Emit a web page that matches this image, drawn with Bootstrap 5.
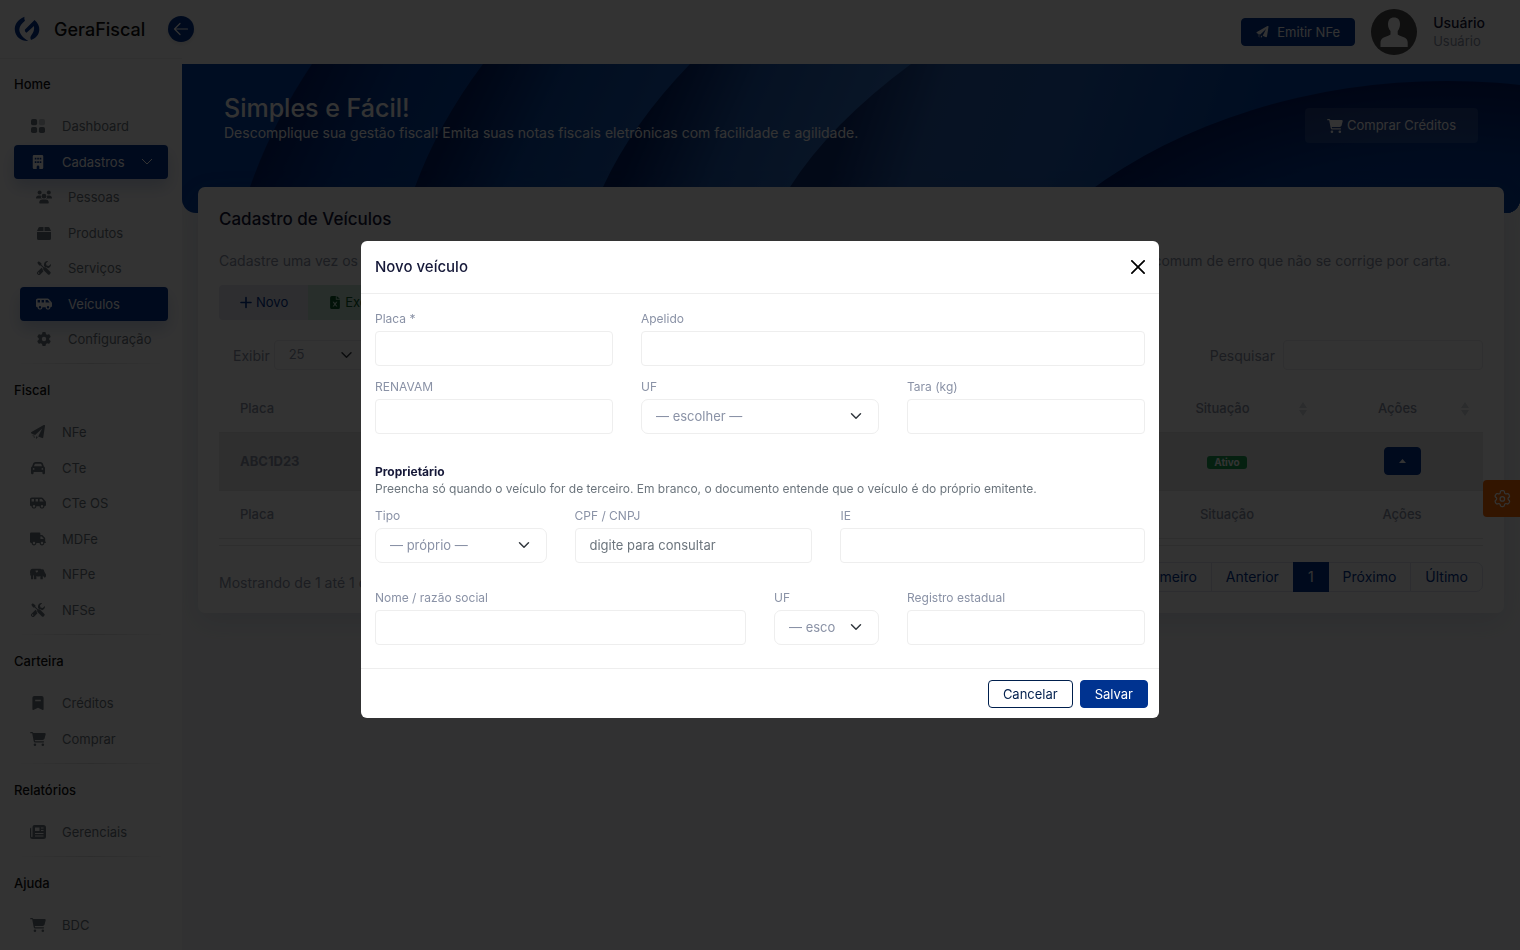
<!DOCTYPE html>
<html lang="pt-BR">
<head>
<meta charset="utf-8">
<meta name="viewport" content="width=device-width, initial-scale=1">
<title>GeraFiscal</title>
<link href="https://cdn.jsdelivr.net/npm/bootstrap@5.3.0/dist/css/bootstrap.min.css" rel="stylesheet">
<style>
:root{--brand:#003390;--ink:#151838;--soft:#8a92a6;--line:#eeeeee}
body{font-family:Inter,"Liberation Sans",sans-serif;font-size:14px;line-height:21px;color:var(--soft);background:#f5f6f8;overflow:hidden}
a{text-decoration:none}
svg{display:block;flex:none}
.ico{width:16px;height:14px;fill:currentColor}
.fs-13{font-size:13px;line-height:18px}
.user-name{line-height:18px;font-weight:500;color:var(--ink)}

/* sidebar */
.side{width:182px;flex:none;background:#fff;height:100vh;position:relative}
.side-head{height:59px;border-bottom:1px solid var(--line);padding-left:14px;gap:14px}
.side-brand{font-size:18px;font-weight:500;color:#111}
.side-toggle{position:absolute;top:16px;right:-12px;width:26px;height:26px;border:0;border-radius:50%;background:var(--brand);color:#fff;z-index:5;box-shadow:0 2px 4px rgba(0,0,0,.1)}
.side-body{padding:8px 14px 0}
.side-title{height:34px;line-height:34px;font-size:13px;font-weight:500;color:#111;margin:0 0 8px}
.side-list{list-style:none;margin:0;padding:0}
.side-list>li:nth-child(odd){margin-bottom:2px}
.side-list>li:nth-child(even){margin-bottom:1px}
.side-list>li:last-child{margin-bottom:0}
.side-link{display:flex;align-items:center;height:34px;padding:0 16px;gap:16px;font-size:13px;color:#6c757d;border-radius:4px}
.side-link.on{background:var(--brand);color:#fff;box-shadow:0 8px 16px rgba(0,51,144,.2)}
.side-sub{margin:1px 0 0 6px}
.side-sub .side-link{padding-right:0}
.side-rule{height:1px;border:0;opacity:1;margin:7px 0 9px;background:linear-gradient(90deg,#fff,#dcdcdc 50%,#fff)}

/* top bar and banner */
.topbar{height:64px;background:#fff;padding-right:35px;gap:16px}
.btn-main{background:var(--brand);border-color:var(--brand);color:#fff}
.btn-flat{font-size:13px;line-height:18px;padding:4px 14px;border-radius:4px}
.banner{height:149px;background:#0040a8;border-radius:0 0 14px 14px;position:relative;overflow:hidden;color:#fff}
.banner-art{position:absolute;inset:0;width:100%;height:100%}
.banner-row{position:relative;padding:30px 42px 0}
.banner h1{font-size:25px;line-height:28px;font-weight:500;margin:0}
.btn-glass{background:rgba(255,255,255,.12);color:#fff;font-size:13px;line-height:19px;padding:8px 22px;border:0;border-radius:4px;margin-top:14px}

/* vehicle card */
.panel{margin:-26px 16px 0;border:0;border-radius:7px;padding:20px 21px;position:relative;box-shadow:0 9px 28px rgba(60,80,140,.12)}
.panel h2{font-size:17px;line-height:24px;font-weight:500;margin:0 0 19px;color:var(--ink)}
.panel-lead{margin:0 0 14px;line-height:21px}
.btn-tool{font-size:13px;line-height:19px;padding:8px 21px;border:0;border-radius:4px}
.btn-tool svg{width:12px;height:13px;fill:currentColor}
.tool-new{background:#e4e6f0;color:var(--brand)}
.tool-xls{background:#c5e6d5;color:#0a5a2a}
.filters{padding:20px 0 0 14px}
.mini-input{height:30px;border:1px solid #e9e9ee;border-radius:4px;font-size:13px;color:var(--soft)}
.mini-select{width:92px;padding:0 32px 0 14px;background-position:right 12px center;background-size:13px 12px}
.mini-search{width:200px}
.table-wrap{margin:16px 0;padding-bottom:6px;border-bottom:1px solid #e6e6e6}
.grid-table{margin:0;width:100%;color:var(--soft)}
.grid-table th,.grid-table td{background:transparent;box-shadow:none;font-size:13px;font-weight:500;color:var(--soft);padding:0 21px;border-color:#e6e6e6;vertical-align:middle}
.grid-table thead th{height:46px;padding-right:30px;position:relative}
.grid-table tbody td{height:58px;background:#ebebeb}
.grid-table tfoot th{height:48px}
.grid-table .c-state{width:188px;text-align:center}
.grid-table .c-act{width:162px;text-align:center}
.sorter{position:absolute;right:14px;top:16px;width:8px;height:14px;fill:#d5d9e0}
.tag-on{background:#1aa053;font-size:10px;line-height:12px;padding:0 7px 1px;height:13px;border-radius:3px;color:#fff;font-weight:700}
.btn-caret{width:37px;height:28px;padding:0;border-radius:4px}
.table-info-text{padding-top:10px}
.page-link{font-size:14px;line-height:20px;padding:4px 14px;color:var(--brand);border-color:#dfe2ee}
.pagination{--bs-pagination-border-radius:7px}
.page-item.active .page-link{background:var(--brand);border-color:var(--brand);color:#fff}
.gearbtn{position:fixed;right:0;top:480px;width:37px;height:37px;border:0;border-radius:4px 0 0 4px;background:#fd6a00;color:#fff}

/* dialog */
.modal-backdrop.show{opacity:.8}
.modal-dialog{--bs-modal-width:798px;--bs-modal-margin:19px;margin:23px auto 15px}
.modal-content{border:0;border-radius:6px}
.modal-header{padding:0 14px;height:53px;border-color:var(--line)}
.modal-title{font-size:15px;line-height:22px;font-weight:500;color:var(--ink)}
.btn-close{width:14px;height:14px;padding:0;margin:0;background-size:14px;opacity:1}
.modal-body{padding:16px 14px 23px}
.modal-body .row{--bs-gutter-x:28px}
.modal-body .form-label{display:block;font-size:12px;line-height:18px;margin:0 0 3px;color:var(--soft)}
.modal-body .form-control,.modal-body .form-select{height:35px;font-size:13px;line-height:19px;padding:7px 14px;border:1px solid var(--line);color:var(--soft)}
.modal-body .form-control{border-radius:4px}
.modal-body .form-control::placeholder{color:#6c757d}
.modal-body .form-select{border-radius:7px;padding-right:42px;background-position:right 15px center;background-size:14px 12px}
.form-next{margin-top:12px}
.form-last{margin-top:26px}
.owner{margin:29px 0 10px}
.owner h6{font-size:12px;line-height:17px;font-weight:700;margin:0;color:var(--ink)}
.owner p{font-size:12px;line-height:17px;margin:0;color:#6c757d}
.modal-footer{padding:11px 11px 10px;gap:7px;border-color:var(--line)}
.modal-footer>*{margin:0}
.btn-cancel{border:1px solid #001f4d;color:#001f4d;background:#fff}
</style>
</head>
<body>
<svg width="0" height="0" class="position-absolute" aria-hidden="true">
  <symbol id="i-cart" viewBox="0 0 576 512"><path d="M0 24C0 10.7 10.7 0 24 0H69.5c22 0 41.5 12.8 50.6 32h411c26.3 0 45.5 25 38.6 50.4l-41 152.3c-8.5 31.4-37 53.3-69.5 53.3H170.7l5.4 28.5c2.2 11.3 12.1 19.5 23.6 19.5H488c13.3 0 24 10.7 24 24s-10.7 24-24 24H199.7c-34.6 0-64.3-24.6-70.7-58.5L77.4 54.5c-.7-3.8-4-6.5-7.9-6.5H24C10.7 48 0 37.3 0 24zM128 464a48 48 0 1 1 96 0 48 48 0 1 1 -96 0zm336-48a48 48 0 1 1 0 96 48 48 0 1 1 0-96z"/></symbol>
  <symbol id="i-plane" viewBox="0 0 512 512"><path d="M500 4c10 7 14 20 12 33l-64 416c-2 20-24 32-44 25L262 420 410 130 150 370 18 312c-22-10-24-40-2-52L464 4c12-6 26-6 36 0zM190 410l60 26-40 56c-12 14-26 6-26-12zM60 360h34v34H60zM110 390h30v30h-30zM70 420h28v28H70zM115 450h26v26h-26z"/></symbol>
  <symbol id="i-gear" viewBox="0 0 512 512"><path d="M495.9 166.6c3.2 8.7 .5 18.4-6.4 24.6l-43.3 39.4c1.1 8.3 1.7 16.8 1.7 25.4s-.6 17.1-1.7 25.4l43.3 39.4c6.9 6.2 9.6 15.9 6.4 24.6c-4.4 11.9-9.7 23.3-15.8 34.3l-4.7 8.1c-6.6 11-14 21.4-22.1 31.2c-5.9 7.2-15.7 9.6-24.5 6.8l-55.7-17.7c-13.4 10.3-28.2 18.9-44 25.4l-12.5 57.1c-2 9.1-9 16.3-18.2 17.8c-13.8 2.3-28 3.5-42.5 3.5s-28.7-1.2-42.5-3.5c-9.2-1.5-16.2-8.7-18.2-17.8l-12.5-57.1c-15.8-6.5-30.6-15.1-44-25.4L83.1 425.9c-8.8 2.8-18.6 .3-24.5-6.8c-8.1-9.8-15.5-20.2-22.1-31.2l-4.7-8.1c-6.1-11-11.4-22.4-15.8-34.3c-3.2-8.7-.5-18.4 6.4-24.6l43.3-39.4C64.6 273.1 64 264.6 64 256s.6-17.1 1.7-25.4L22.4 191.2c-6.9-6.2-9.6-15.9-6.4-24.6c4.4-11.9 9.7-23.3 15.8-34.3l4.7-8.1c6.6-11 14-21.4 22.1-31.2c5.9-7.2 15.7-9.6 24.5-6.8l55.7 17.7c13.4-10.3 28.2-18.9 44-25.4l12.5-57.1c2-9.1 9-16.3 18.2-17.8C227.3 1.2 241.5 0 256 0s28.7 1.2 42.5 3.5c9.2 1.5 16.2 8.7 18.2 17.8l12.5 57.1c15.8 6.5 30.6 15.1 44 25.4l55.7-17.7c8.8-2.8 18.6-.3 24.5 6.8c8.1 9.8 15.5 20.2 22.1 31.2l4.7 8.1c6.1 11 11.4 22.4 15.8 34.3zM256 336a80 80 0 1 0 0-160 80 80 0 1 0 0 160z"/></symbol>
  <symbol id="i-truck" viewBox="0 0 640 512"><path d="M48 0C21.5 0 0 21.5 0 48V368c0 26.5 21.5 48 48 48H64c0 53 43 96 96 96s96-43 96-96H384c0 53 43 96 96 96s96-43 96-96h32c17.7 0 32-14.3 32-32s-14.3-32-32-32V288 256 237.3c0-17-6.7-33.3-18.7-45.3L512 114.7c-12-12-28.3-18.7-45.3-18.7H416V48c0-26.5-21.5-48-48-48H48zM416 160h50.7L544 237.3V256H416V160zM112 416a48 48 0 1 1 96 0 48 48 0 1 1 -96 0zm368-48a48 48 0 1 1 0 96 48 48 0 1 1 0-96z"/></symbol>
  <symbol id="i-van" viewBox="0 0 640 512"><path d="M64 104v88h96V96H72c-4.4 0-8 3.6-8 8zm482 88L465.1 96H384v96H546zm-226 0V96H224v96h96zM592 384H576c0 53-43 96-96 96s-96-43-96-96H256c0 53-43 96-96 96s-96-43-96-96H48c-26.5 0-48-21.5-48-48V104C0 64.2 32.2 32 72 32H192 352 465.1c18.9 0 36.8 8.3 49 22.8L625.3 186.5c9.5 11.2 14.7 25.5 14.7 40.2V336c0 26.5-21.5 48-48 48zm-64 0a48 48 0 1 0 -96 0 48 48 0 1 0 96 0zM160 432a48 48 0 1 0 0-96 48 48 0 1 0 0 96z"/></symbol>
  <symbol id="i-car" viewBox="0 0 512 512"><path d="M135.2 117.4L109.1 192H402.9l-26.1-74.6C372.3 104.6 360.2 96 346.6 96H165.4c-13.6 0-25.7 8.6-30.2 21.4zM39.6 196.8L74.8 96.3C88.3 57.8 124.6 32 165.4 32H346.6c40.8 0 77.1 25.8 90.6 64.3l35.2 100.5c23.2 9.6 39.6 32.5 39.6 59.2V400v48c0 17.7-14.3 32-32 32H448c-17.7 0-32-14.3-32-32V400H96v48c0 17.7-14.3 32-32 32H32c-17.7 0-32-14.3-32-32V400 256c0-26.7 16.4-49.6 39.6-59.2zM128 288a32 32 0 1 0 -64 0 32 32 0 1 0 64 0zm288 32a32 32 0 1 0 0-64 32 32 0 1 0 0 64z"/></symbol>
  <symbol id="i-dash" viewBox="0 0 16 16"><rect x="0" y="0" width="7" height="7" rx="2"/><rect x="9" y="0" width="7" height="7" rx="2" opacity=".4"/><rect x="0" y="9" width="7" height="7" rx="2"/><rect x="9" y="9" width="7" height="7" rx="2"/></symbol>
  <symbol id="i-build" viewBox="0 0 12 16"><path fill-rule="evenodd" d="M1.5 0h9A1.5 1.5 0 0 1 12 1.5v13a1.5 1.5 0 0 1-1.5 1.5H7.5v-2.500a1.5 1.5 0 0 0-3 0V16h-3A1.5 1.5 0 0 1 0 14.500v-13A1.5 1.5 0 0 1 1.5 0zM2.300 3v2h1.900V3zM5.100 3v2h1.900V3zM7.900 3v2h1.900V3zM2.300 7v2h1.900V7zM5.100 7v2h1.900V7zM7.900 7v2h1.900V7z"/></symbol>
  <symbol id="i-users" viewBox="0 0 20 16"><circle cx="4.500" cy="2.500" r="2.500"/><circle cx="16" cy="2.500" r="2.500"/><circle cx="10" cy="7" r="3"/><path d="M0 9.300C0 7.500 1.500 6 3.300 6h1.400c.5 0 1 .1 1.400.3A4 4 0 0 0 7.500 10H.7a.7.7 0 0 1-.7-.7zM20 9.300C20 7.500 18.500 6 16.700 6h-1.400c-.5 0-1 .1-1.400.3A4 4 0 0 1 12.500 10h6.800c.4 0 .7-.3.7-.7zM4 15.200A4.200 4.200 0 0 1 8.200 11h3.600a4.200 4.200 0 0 1 4.200 4.200c0 .4-.4.8-.8.8H4.800a.8.8 0 0 1-.8-.8z"/></symbol>
  <symbol id="i-box" viewBox="0 0 14 14"><path d="M6.500 1v4H0l1.300-3.100A1.500 1.500 0 0 1 2.700 1zM7.500 1v4H14l-1.300-3.100A1.500 1.500 0 0 0 11.300 1zM0 6h14v6.500a1.500 1.500 0 0 1-1.500 1.500h-11A1.500 1.500 0 0 1 0 12.500z"/></symbol>
  <symbol id="i-tools" viewBox="0 0 16 16"><path d="M.3 2 2 .3 5 2.500v1.700l3 3c.8-.3 1.800-.2 2.500.4l4.600 4.600a1.800 1.800 0 0 1 0 2.500l-.4.400a1.800 1.800 0 0 1-2.500 0L7.600 10.500c-.6-.7-.8-1.700-.4-2.500l-3-3H2.500zM15.800 3.300 13.400 5.700 10.800 5.200l-.5-2.600L12.700.2C10.500-.4 8 1.200 8 3.900v1.700l1.200 1.200c1-.2 2 .2 2.700.8l.6.600C15 7.700 16.500 5.500 15.800 3.300zM6.400 8.800 5.200 7.600.6 12.200a2 2 0 0 0 0 2.900l.3.300a2 2 0 0 0 2.900 0L7.400 11.700a4 4 0 0 1-1-2.900zM2.200 14.500a.8.8 0 1 1 0-1.500.8.8 0 0 1 0 1.500z"/></symbol>
  <symbol id="i-mark" viewBox="0 0 12 15"><path fill-rule="evenodd" d="M2 0h8a2 2 0 0 1 2 2v12.300c0 .6-.6.900-1.100.6L6 12.500 1.100 14.900c-.5.300-1.100 0-1.100-.6V2a2 2 0 0 1 2-2zM3 4v1.500h6V4z"/></symbol>
  <symbol id="i-news" viewBox="0 0 16 14"><path fill-rule="evenodd" d="M4.500 0h9A2.500 2.500 0 0 1 16 2.500v9a2.500 2.500 0 0 1-2.500 2.500h-11A2.500 2.500 0 0 1 0 11.500V4a1.500 1.500 0 0 1 1.200-1.500v9c0 .8 1.300.8 1.300 0V2A2 2 0 0 1 4.500 0zM5 2.500V6h4.500V2.500zM11 2.500v1h2.500v-1zM11 5v1h2.500V5zM5 8v1h8.500V8zM5 10.500v1h8.500v-1z"/></symbol>
  <symbol id="i-cow" viewBox="0 0 20 14"><path fill-rule="evenodd" d="M3 .5h9.500c1 0 1.300.8 2 .8L15 .5l1.300 1.200L17 1.200l1 3 2 3.500v2c-.5 1.500-1.600 1.800-2.500 1.300L16 9v4.500h-3v-4c-1.600 1-3.400 1-5 0v4H5V9.500L4 8v5.500H1.300V5L1 6.500V9H0V5C0 2.200 1.300.5 3 .5zM7 2.500v1.500l1.500 1.500L10 4V2.500z"/></symbol>
  <symbol id="i-xls" viewBox="0 0 12 16"><path fill-rule="evenodd" d="M2 0h5v4.500h5V14a2 2 0 0 1-2 2H2a2 2 0 0 1-2-2V2a2 2 0 0 1 2-2zM8 0l4 3.500H8zM3 7l2 3-2 3h1.700L6 11l1.300 2H9l-2-3 2-3H7.300L6 9 4.700 7z"/></symbol>
  <symbol id="i-sort" viewBox="0 0 8 14"><path d="M4 0l4 6H0zM4 14l4-6H0z"/></symbol>
</svg>

<div class="d-flex">
  <aside class="side">
    <div class="side-head d-flex align-items-center">
      <svg width="26" height="26" viewBox="0 0 26 26" fill="#003390"><path d="M10.500.7C3 4 .5 9 .8 14 1.500 21 7 25.300 14.300 25 9 22 5.500 18 5.300 13.500 5.500 9.800 8 7.600 11 4.800 10.300 3.500 10.200 2 10.500.7z"/><path d="M10.800 13.800 20.500 4C24 7 25.500 10 25.300 14 25 19 21.500 22.500 17 24c-1-2-.7-3.500.5-5 2-2.500 3-5.500 2.500-9l-7.500 6.700c-1-.2-1.700-1.300-1.700-2.900z"/></svg>
      <span class="side-brand">GeraFiscal</span>
    </div>
    <button type="button" class="side-toggle d-flex align-items-center justify-content-center p-0" aria-label="Recolher menu"><svg width="16" height="14" viewBox="0 0 16 14" fill="none" stroke="currentColor" stroke-width="1.200" stroke-linecap="round" stroke-linejoin="round"><path d="M14.500 7h-13M7 1.500 1.500 7 7 12.500"/></svg></button>
    <nav class="side-body">
      <h6 class="side-title">Home</h6>
      <ul class="side-list">
        <li><a class="side-link" href="#"><svg class="ico"><use href="#i-dash"/></svg>Dashboard</a></li>
        <li>
          <a class="side-link on" href="#"><svg class="ico"><use href="#i-build"/></svg>Cadastros<svg class="ms-auto" width="12" height="8" viewBox="0 0 12 8" fill="none" stroke="currentColor" stroke-width="1"><path d="M1 1l5 5 5-5"/></svg></a>
          <ul class="side-list side-sub">
            <li><a class="side-link" href="#"><svg class="ico"><use href="#i-users"/></svg>Pessoas</a></li>
            <li><a class="side-link" href="#"><svg class="ico"><use href="#i-box"/></svg>Produtos</a></li>
            <li><a class="side-link" href="#"><svg class="ico"><use href="#i-tools"/></svg>Serviços</a></li>
            <li><a class="side-link on" href="#"><svg class="ico"><use href="#i-van"/></svg>Veículos</a></li>
            <li><a class="side-link" href="#"><svg class="ico"><use href="#i-gear"/></svg>Configuração</a></li>
          </ul>
        </li>
      </ul>
      <hr class="side-rule">
      <h6 class="side-title">Fiscal</h6>
      <ul class="side-list">
        <li><a class="side-link" href="#"><svg class="ico"><use href="#i-plane"/></svg>NFe</a></li>
        <li><a class="side-link" href="#"><svg class="ico"><use href="#i-car"/></svg>CTe</a></li>
        <li><a class="side-link" href="#"><svg class="ico"><use href="#i-van"/></svg>CTe OS</a></li>
        <li><a class="side-link" href="#"><svg class="ico"><use href="#i-truck"/></svg>MDFe</a></li>
        <li><a class="side-link" href="#"><svg class="ico"><use href="#i-cow"/></svg>NFPe</a></li>
        <li><a class="side-link" href="#"><svg class="ico"><use href="#i-tools"/></svg>NFSe</a></li>
      </ul>
      <hr class="side-rule">
      <h6 class="side-title">Carteira</h6>
      <ul class="side-list">
        <li><a class="side-link" href="#"><svg class="ico"><use href="#i-mark"/></svg>Créditos</a></li>
        <li><a class="side-link" href="#"><svg class="ico"><use href="#i-cart"/></svg>Comprar</a></li>
      </ul>
      <hr class="side-rule">
      <h6 class="side-title">Relatórios</h6>
      <ul class="side-list">
        <li><a class="side-link" href="#"><svg class="ico"><use href="#i-news"/></svg>Gerenciais</a></li>
      </ul>
      <hr class="side-rule">
      <h6 class="side-title">Ajuda</h6>
      <ul class="side-list">
        <li><a class="side-link" href="#"><svg class="ico"><use href="#i-cart"/></svg>BDC</a></li>
      </ul>
    </nav>
  </aside>

  <main class="flex-fill overflow-hidden vh-100">
    <header class="topbar d-flex align-items-center justify-content-end">
      <a class="btn btn-main btn-flat d-flex align-items-center gap-2" href="#"><svg width="13" height="12" fill="currentColor"><use href="#i-plane"/></svg>Emitir NFe</a>
      <svg width="46" height="46" viewBox="0 0 46 46"><circle cx="23" cy="23" r="23" fill="#4a4a4a"/><path fill="#fff" d="M23 8.500c4 0 6 2.700 6 6.500 0 3-1 5.500-2.300 7v3.500c2 1.500 5 2 7.300 3.200 2 1 2.700 3 2.700 5V38H9.500v-4.300c0-2 .7-4 2.700-5 2.300-1.200 5.300-1.700 7.300-3.200V22C18 20.500 17 18 17 15c0-3.800 2-6.500 6-6.500z"/></svg>
      <div>
        <div class="user-name">Usuário</div>
        <div class="fs-13">Usuário</div>
      </div>
    </header>

    <section class="banner">
      <svg class="banner-art" viewBox="0 0 1338 149" preserveAspectRatio="none" aria-hidden="true">
        <defs>
          <linearGradient id="g1" gradientUnits="userSpaceOnUse" x1="99" y1="61" x2="280" y2="150"><stop offset="0" stop-color="#002070"/><stop offset=".4" stop-color="#003c9c"/><stop offset="1" stop-color="#0848ac"/></linearGradient>
          <linearGradient id="g2" gradientUnits="userSpaceOnUse" x1="267" y1="61" x2="450" y2="150"><stop offset="0" stop-color="#001e68"/><stop offset=".4" stop-color="#0a48a4"/><stop offset="1" stop-color="#1a5ab8"/></linearGradient>
          <linearGradient id="g3" gradientUnits="userSpaceOnUse" x1="460" y1="61" x2="660" y2="150"><stop offset="0" stop-color="#002068"/><stop offset=".4" stop-color="#1c56ac"/><stop offset="1" stop-color="#3070c4"/></linearGradient>
          <linearGradient id="g4" gradientUnits="userSpaceOnUse" x1="662" y1="61" x2="1040" y2="190"><stop offset="0" stop-color="#0c2e74"/><stop offset=".2" stop-color="#255aac"/><stop offset=".5" stop-color="#205cb4"/><stop offset="1" stop-color="#0042a8"/></linearGradient>
          <radialGradient id="g5"><stop offset=".55" stop-color="#0042a8"/><stop offset=".8" stop-color="#003a98"/><stop offset="1" stop-color="#001c68"/></radialGradient>
        </defs>
        <path fill="url(#g1)" d="M130 0Q90 60 68 123L60 149H1338V0z"/>
        <path fill="url(#g2)" d="M301 0Q256 60 233 123L225 149H1338V0z"/>
        <path fill="url(#g3)" d="M508 0Q450 60 421 123L411 149H1338V0z"/>
        <path fill="url(#g4)" d="M729 0Q648 60 608 123L593 149H1338V0z"/>
        <ellipse fill="url(#g5)" cx="1265" cy="400" rx="510" ry="383"/>
      </svg>
      <div class="banner-row d-flex justify-content-between align-items-start">
        <div>
          <h1>Simples e Fácil!</h1>
          <p class="m-0">Descomplique sua gestão fiscal! Emita suas notas fiscais eletrônicas com facilidade e agilidade.</p>
        </div>
        <a class="btn btn-glass d-flex align-items-center gap-1" href="#"><svg class="ico"><use href="#i-cart"/></svg>Comprar Créditos</a>
      </div>
    </section>

    <section class="card panel">
      <h2>Cadastro de Veículos</h2>
      <p class="panel-lead">Cadastre uma vez os veículos que a empresa usa e escolha pela placa ao emitir o documento. Digitar a placa a cada emissão é a causa mais comum de erro que não se corrige por carta.</p>
      <div class="btn-group align-self-start" role="group">
        <button type="button" class="btn btn-tool tool-new d-flex align-items-center gap-1"><svg viewBox="0 0 12 12" fill="none"><path d="M6 1v10M1 6h10" stroke="currentColor" stroke-width="1.600" stroke-linecap="round"/></svg>Novo</button>
        <button type="button" class="btn btn-tool tool-xls d-flex align-items-center gap-1"><svg><use href="#i-xls"/></svg>Excel</button>
      </div>
      <div class="filters d-flex justify-content-between align-items-center">
        <div class="d-flex align-items-center"><label for="len" class="me-1">Exibir</label>
          <select id="len" class="form-select mini-input mini-select"><option>25</option></select></div>
        <div class="d-flex align-items-center"><label for="find" class="me-2">Pesquisar</label>
          <input id="find" type="search" class="form-control mini-input mini-search"></div>
      </div>
      <div class="table-wrap">
      <table class="table grid-table">
        <thead><tr><th>Placa</th><th class="c-state">Situação<svg class="sorter"><use href="#i-sort"/></svg></th><th class="c-act">Ações<svg class="sorter"><use href="#i-sort"/></svg></th></tr></thead>
        <tbody><tr><td><strong>ABC1D23</strong></td><td class="c-state"><span class="badge tag-on">Ativo</span></td><td class="c-act"><button type="button" class="btn btn-main btn-caret" aria-label="Ações"><svg class="mx-auto" width="7" height="4" viewBox="0 0 7 4" fill="currentColor"><path d="M0 4 3.500 0 7 4z"/></svg></button></td></tr></tbody>
        <tfoot><tr><th>Placa</th><th class="c-state">Situação</th><th class="c-act">Ações</th></tr></tfoot>
      </table>
      </div>
      <div class="d-flex justify-content-between align-items-start">
        <div class="table-info-text">Mostrando de 1 até 1 de 1 registros</div>
        <ul class="pagination m-0">
          <li class="page-item"><a class="page-link" href="#">Primeiro</a></li>
          <li class="page-item"><a class="page-link" href="#">Anterior</a></li>
          <li class="page-item active"><a class="page-link" href="#">1</a></li>
          <li class="page-item"><a class="page-link" href="#">Próximo</a></li>
          <li class="page-item"><a class="page-link" href="#">Último</a></li>
        </ul>
      </div>
    </section>
  </main>
</div>
<button type="button" class="gearbtn d-flex align-items-center justify-content-center p-0" aria-label="Configurações"><svg width="20" height="20" viewBox="0 0 24 24" fill="none" stroke="currentColor" stroke-width="1.500"><path d="M20.800 7.600l-.6-1.100a1.900 1.900 0 0 0-2.500-.7 1.900 1.900 0 0 1-2.700-1.600A1.800 1.800 0 0 0 13.100 2h-1.300A1.800 1.800 0 0 0 10 4.100a1.900 1.900 0 0 1-2.800 1.600 1.800 1.800 0 0 0-2.500.7l-.7 1.200a1.800 1.800 0 0 0 .7 2.500 1.900 1.900 0 0 1 0 3.300 1.800 1.800 0 0 0-.7 2.500l.6 1.100a1.900 1.900 0 0 0 2.500.7 1.900 1.900 0 0 1 2.800 1.600c0 1 .8 1.800 1.900 1.800h1.300c1 0 1.800-.8 1.800-1.800a1.900 1.900 0 0 1 2.800-1.600 1.900 1.900 0 0 0 2.500-.7l.7-1.100a1.800 1.800 0 0 0-.7-2.500 1.900 1.900 0 0 1 0-3.300 1.800 1.800 0 0 0 .6-2.500z"/><circle cx="12.400" cy="11.900" r="2.700"/></svg></button>

<div class="modal-backdrop show"></div>
<div class="modal show d-block" tabindex="-1" role="dialog" aria-labelledby="dlgTitle" aria-modal="true">
  <div class="modal-dialog modal-dialog-centered">
    <form class="modal-content">
      <div class="modal-header">
        <h5 class="modal-title" id="dlgTitle">Novo veículo</h5>
        <button type="button" class="btn-close" aria-label="Fechar"></button>
      </div>
      <div class="modal-body">
        <div class="row">
          <div class="col-4"><label class="form-label" for="placa">Placa *</label><input class="form-control" id="placa"></div>
          <div class="col-8"><label class="form-label" for="apelido">Apelido</label><input class="form-control" id="apelido"></div>
        </div>
        <div class="row form-next">
          <div class="col-4"><label class="form-label" for="renavam">RENAVAM</label><input class="form-control" id="renavam"></div>
          <div class="col-4"><label class="form-label" for="uf">UF</label><select class="form-select" id="uf"><option>— escolher —</option></select></div>
          <div class="col-4"><label class="form-label" for="tara">Tara (kg)</label><input class="form-control" id="tara"></div>
        </div>
        <div class="owner">
          <h6>Proprietário</h6>
          <p>Preencha só quando o veículo for de terceiro. Em branco, o documento entende que o veículo é do próprio emitente.</p>
        </div>
        <div class="row">
          <div class="col-3"><label class="form-label" for="tipo">Tipo</label><select class="form-select" id="tipo"><option>— próprio —</option></select></div>
          <div class="col-4"><label class="form-label" for="doc">CPF / CNPJ</label><input class="form-control" id="doc" placeholder="digite para consultar"></div>
          <div class="col-5"><label class="form-label" for="ie">IE</label><input class="form-control" id="ie"></div>
        </div>
        <div class="row form-last">
          <div class="col-6"><label class="form-label" for="nome">Nome / razão social</label><input class="form-control" id="nome"></div>
          <div class="col-2"><label class="form-label" for="uf2">UF</label><select class="form-select" id="uf2"><option>— escolher —</option></select></div>
          <div class="col-4"><label class="form-label" for="reg">Registro estadual</label><input class="form-control" id="reg"></div>
        </div>
      </div>
      <div class="modal-footer">
        <button type="button" class="btn btn-flat btn-cancel">Cancelar</button>
        <button type="submit" class="btn btn-flat btn-main">Salvar</button>
      </div>
    </form>
  </div>
</div>
<script src="https://cdn.jsdelivr.net/npm/bootstrap@5.3.0/dist/js/bootstrap.bundle.min.js"></script>
</body>
</html>
